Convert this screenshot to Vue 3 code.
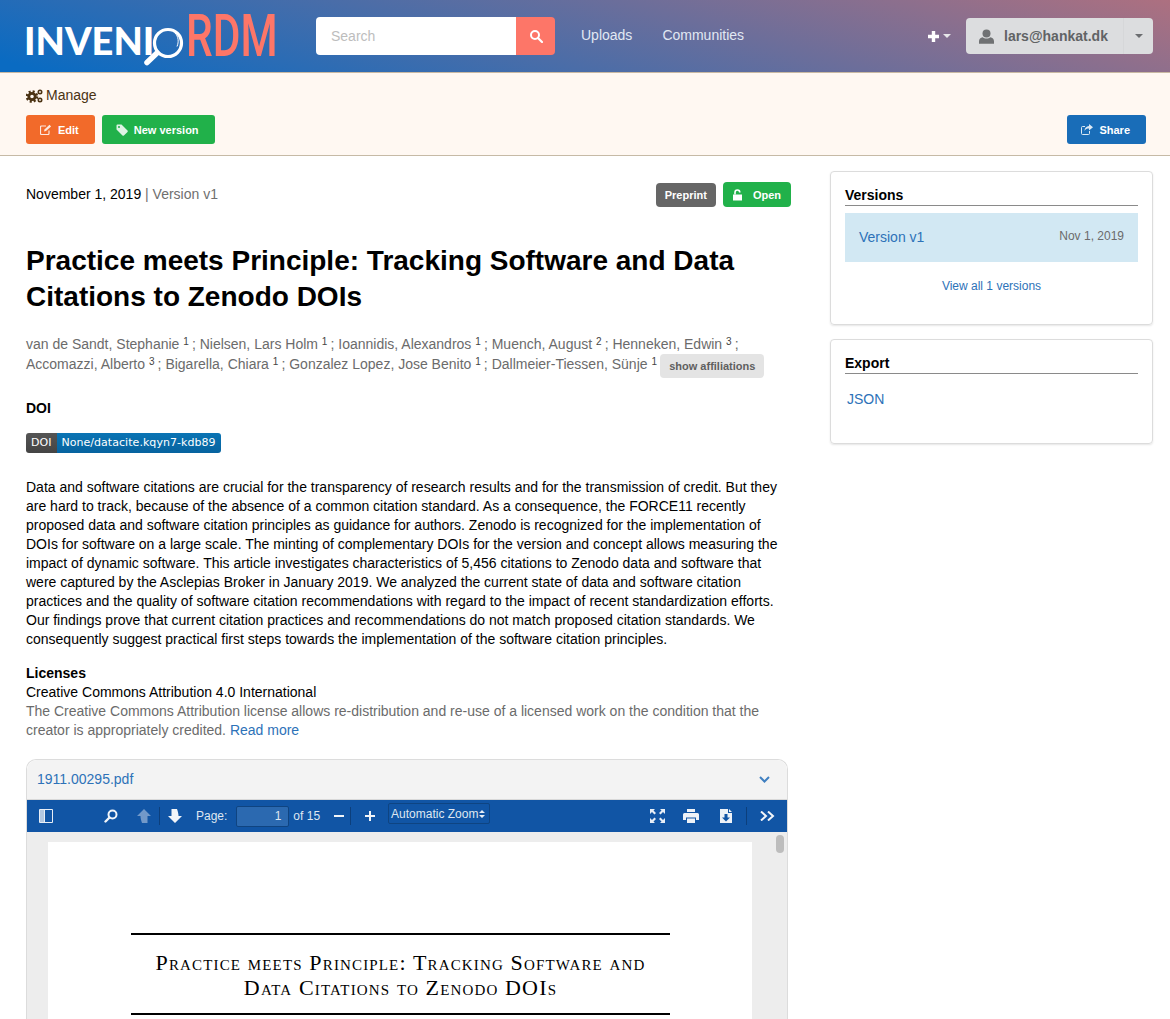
<script setup>
const authors = [
  ['van de Sandt, Stephanie', 1],
  ['Nielsen, Lars Holm', 1],
  ['Ioannidis, Alexandros', 1],
  ['Muench, August', 2],
  ['Henneken, Edwin', 3],
  ['Accomazzi, Alberto', 3],
  ['Bigarella, Chiara', 1],
  ['Gonzalez Lopez, Jose Benito', 1],
  ['Dallmeier-Tiessen, Sünje', 1],
]
</script>

<template>
  <div class="page">
    <header class="topbar">
      <div class="logo">
        <span class="logo-invenio">INVENI</span>
        <svg class="logo-lens" width="44" height="46" viewBox="0 0 44 46">
          <circle cx="28" cy="21" r="13.500" fill="none" stroke="#fff" stroke-width="3.200" />
          <path d="M35 11c3.500 3.500 4 9 2 13.500" fill="none" stroke="#fff" stroke-width="1" />
          <path d="M17 31 7 40.500" stroke="#fff" stroke-width="5.500" stroke-linecap="round" />
        </svg>
        <span class="logo-rdm">RDM</span>
      </div>
      <div class="search">
        <div class="search-input">Search</div>
        <div class="search-btn">
          <svg width="14" height="14" viewBox="0 0 14 14">
            <circle cx="6" cy="6" r="4" fill="none" stroke="#fff" stroke-width="2" />
            <path d="m9 9 4 4" stroke="#fff" stroke-width="2.200" stroke-linecap="round" />
          </svg>
        </div>
      </div>
      <nav class="nav">
        <a>Uploads</a>
        <a>Communities</a>
      </nav>
      <div class="top-right">
        <div class="plus">
          <svg width="13" height="13" viewBox="0 0 13 13"><path d="M6.500 1v11M1 6.500h11" stroke="#fff" stroke-width="3.400" /></svg>
          <i class="caret white"></i>
        </div>
        <div class="user">
          <svg width="15" height="15" viewBox="0 0 15 15" fill="#6f7173">
            <circle cx="7.500" cy="4.400" r="4" />
            <path d="M0 14.800v-2.600C0 10 1.600 8.600 3.600 8.200c1 .9 2.400 1.400 3.900 1.400s2.900-.5 3.900-1.400c2 .4 3.600 1.800 3.600 4v2.600z" />
          </svg>
          <span class="user-mail">lars@hankat.dk</span>
          <span class="user-toggle"><i class="caret grey"></i></span>
        </div>
      </div>
    </header>

    <section class="manage">
      <div class="manage-title">
        <svg width="17" height="14" viewBox="0 0 17 14" fill="none" stroke="#4a3213">
          <circle cx="6" cy="7.500" r="5" stroke-width="2.600" stroke-dasharray="2 1.930" />
          <circle cx="6" cy="7.500" r="3.200" stroke-width="2.800" />
          <circle cx="14" cy="3" r="1.700" stroke-width="1.600" />
          <circle cx="14" cy="11" r="1.700" stroke-width="1.600" />
        </svg>
        Manage
      </div>
      <div class="manage-actions">
        <button class="btn orange">
          <svg class="btn-ico" width="12" height="11" viewBox="0 0 12 11" fill="none" stroke="#fff" stroke-width="1.200">
            <path d="M9 6.500v3a1 1 0 0 1-1 1H1.500a1 1 0 0 1-1-1V3a1 1 0 0 1 1-1H6" />
            <path d="M4 7.500 4.500 5.500 9.500.8l1.600 1.600L6 7z" fill="#fff" stroke="none" />
          </svg>
          Edit
        </button>
        <button class="btn green">
          <svg class="btn-ico" width="12" height="12" viewBox="0 0 12 12" fill="#fff">
            <path d="M.5 1.500A1 1 0 0 1 1.500.5h4l6 6a1 1 0 0 1 0 1.400l-3.600 3.600a1 1 0 0 1-1.400 0l-6-6zM3 2a1 1 0 1 0 0 2 1 1 0 0 0 0-2z" fill-rule="evenodd" />
          </svg>
          New version
        </button>
        <button class="btn blue share">
          <svg class="btn-ico" width="12" height="11" viewBox="0 0 12 11" fill="none" stroke="#fff" stroke-width="1">
            <path d="M8.500 7v2.500a1 1 0 0 1-1 1h-6a1 1 0 0 1-1-1V3.500a1 1 0 0 1 1-1H4" />
            <path d="M8 0l4 3.200L8 6.400V4.600C6 4.600 4.500 5 3.500 7c0-3 1.800-4.700 4.500-4.900z" fill="#fff" stroke="none" />
          </svg>
          Share
        </button>
      </div>
    </section>

    <main class="content">
      <article class="record">
        <div class="meta">
          <div><span class="date">November 1, 2019</span> <span class="version">| Version v1</span></div>
          <div class="badges">
            <span class="badge dark">Preprint</span>
            <span class="badge open">
              <svg width="11" height="12" viewBox="0 0 11 12" fill="#fff">
                <path d="M1 5.500h9v6H1z" />
                <path d="M3 5.500V3.400a2.400 2.400 0 0 1 4.800 0" fill="none" stroke="#fff" stroke-width="1.600" />
              </svg>
              Open
            </span>
          </div>
        </div>

        <h1 class="title">Practice meets Principle: Tracking Software and Data Citations to Zenodo DOIs</h1>

        <p class="authors">
          <template v-for="(a, i) in authors" :key="a[0]">
            {{ a[0] }} <sup>{{ a[1] }}</sup><template v-if="i < authors.length - 1"> ; </template>
          </template>
          <span class="affil">show affiliations</span>
        </p>

        <h2 class="doi-head">DOI</h2>
        <div class="doi-badge"><span class="doi-l">DOI</span><span class="doi-r">None/datacite.kqyn7-kdb89</span></div>

        <p class="abstract">
          Data and software citations are crucial for the transparency of research results and for the transmission of credit. But they are hard to track, because of the absence of a common citation standard. As a consequence, the FORCE11 recently proposed data and software citation principles as guidance for authors. Zenodo is recognized for the implementation of DOIs for software on a large scale. The minting of complementary DOIs for the version and concept allows measuring the impact of dynamic software. This article investigates characteristics of 5,456 citations to Zenodo data and software that were captured by the Asclepias Broker in January 2019. We analyzed the current state of data and software citation practices and the quality of software citation recommendations with regard to the impact of recent standardization efforts. Our findings prove that current citation practices and recommendations do not match proposed citation standards. We consequently suggest practical first steps towards the implementation of the software citation principles.
        </p>

        <div class="licenses">
          <b>Licenses</b>
          <div>Creative Commons Attribution 4.0 International</div>
          <div class="license-text">The Creative Commons Attribution license allows re-distribution and re-use of a licensed work on the condition that the creator is appropriately credited. <a>Read more</a></div>
        </div>

        <div class="preview">
          <div class="preview-head">
            <a>1911.00295.pdf</a>
            <svg width="11" height="7" viewBox="0 0 11 7"><path d="m1 1 4.500 4.500L10 1" fill="none" stroke="#3f7fc0" stroke-width="2" /></svg>
          </div>
          <div class="pdf-toolbar">
            <div class="tb-left">
              <svg class="sidebar-ico" width="14" height="14" viewBox="0 0 14 14">
                <path d="M.5.500h13v13H.5z" fill="none" stroke="#e8eef6" />
                <path d="M1 1h4v12H1z" fill="#e8eef6" opacity=".75" />
                <path d="M5 1h1v12H5z" fill="#e8eef6" />
              </svg>
              <svg class="find-ico" width="14" height="14" viewBox="0 0 14 14">
                <circle cx="8.500" cy="5.500" r="4" fill="none" stroke="#f2f5f9" stroke-width="2" />
                <path d="M5.500 8.500 1.500 12.500" stroke="#f2f5f9" stroke-width="2.400" stroke-linecap="round" />
              </svg>
              <svg class="up-ico" width="14" height="14" viewBox="0 0 14 14"><path d="M7 0 14 7H10.500V14H5C4 11 3.500 9 3.500 7H0z" fill="#e8eef6" opacity=".45" /></svg>
              <i class="tb-sep"></i>
              <svg class="down-ico" width="14" height="14" viewBox="0 0 14 14"><path d="M7 14 0 7H3.500V0H9C10 3 10.500 5 10.500 7H14z" fill="#f2f5f9" /></svg>
              <span class="tb-label">Page:</span>
              <span class="tb-page">1</span>
              <span class="tb-of">of 15</span>
              <svg class="minus-ico" width="10" height="2" viewBox="0 0 10 2"><path d="M0 0h10v2H0z" fill="#f2f5f9" /></svg>
              <i class="tb-sep sep-zoom"></i>
              <svg class="plus-ico" width="10" height="10" viewBox="0 0 10 10"><path d="M4 0h2v4h4v2H6v4H4V6H0V4h4z" fill="#f2f5f9" /></svg>
              <span class="tb-zoom">Automatic Zoom<svg width="6" height="8" viewBox="0 0 6 8" fill="#e8eef6"><path d="M3 0 6 3H0zM3 8 0 5h6z" /></svg></span>
            </div>
            <div class="tb-right">
              <svg class="full-ico" width="15" height="14" viewBox="0 0 15 14" fill="#e8eef6">
                <path d="M0 0h5L3.500 1.500 6 4 4.500 5.500 2 3 0 5zM15 0h-5l1.500 1.500L9 4l1.500 1.500L13 3l2 2zM0 14h5l-1.500-1.500L6 10 4.500 8.500 2 11l-2-2zM15 14h-5l1.500-1.500L9 10l1.500-1.500L13 11l2-2z" />
              </svg>
              <svg class="print-ico" width="16" height="14" viewBox="0 0 16 14" fill="#eef2f7">
                <path d="M4 0h8v3H4zM1.500 4h13A1.500 1.500 0 0 1 16 5.500V11h-3V8.500H3V11H0V5.500A1.500 1.500 0 0 1 1.500 4zM4 9.500h8V14H4z" />
              </svg>
              <svg class="save-ico" width="12" height="14" viewBox="0 0 12 14">
                <path d="M0 0h8v4h4v10H0zM9 0l3 3H9z" fill="#eef2f7" />
                <path d="M4.500 5h3v3.500H10L6 12.500 2 8.500h2.500z" fill="#1155a5" />
              </svg>
              <i class="tb-sep"></i>
              <svg class="more-ico" width="15" height="10" viewBox="0 0 15 10" fill="none" stroke="#f2f5f9" stroke-width="2"><path d="m1 .500 5 4.500-5 4.500M8 .500 13 5l-5 4.500" /></svg>
            </div>
          </div>
          <div class="pdf-body">
            <div class="pdf-page">
              <div class="paper-title">
                Practice meets Principle: Tracking Software and<br />Data Citations to Zenodo DOIs
              </div>
            </div>
            <i class="scroll-thumb"></i>
          </div>
        </div>
      </article>

      <aside class="side">
        <div class="card versions">
          <h3>Versions</h3>
          <div class="version-row"><a>Version v1</a><small>Nov 1, 2019</small></div>
          <a class="view-all">View all 1 versions</a>
        </div>
        <div class="card export">
          <h3>Export</h3>
          <a class="json">JSON</a>
        </div>
      </aside>
    </main>
  </div>
</template>

<style scoped>
.page {
  width: 1170px;
  height: 1019px;
  overflow: hidden;
  background: #fff;
  color: #000;
  font-family: 'Liberation Sans', Arial, sans-serif;
  font-size: 14px;
  line-height: 19px;
}
a {
  color: #2d72b8;
}

/* top bar */
.topbar {
  display: flex;
  align-items: center;
  height: 72px;
  padding: 0 17px 0 26px;
  background: linear-gradient(16deg, #0a6bc2 3%, #ad7080 100%);
  border-bottom: 1px solid #c9b9a3;
}
.logo {
  display: flex;
  align-items: flex-start;
  width: 252px;
  height: 72px;
  flex: none;
}
.logo-invenio {
  color: #fff;
  font-family: 'Lato', sans-serif;
  font-weight: 900;
  font-size: 38px;
  line-height: 38px;
  margin: 21px 0 0 -2px;
}
.logo-lens {
  flex: none;
  margin: 22px 0 0 -14px;
}
.logo-rdm {
  color: #fd7668;
  font-family: 'Roboto', sans-serif;
  font-weight: 500;
  font-size: 59px;
  line-height: 50px;
  margin: 11px 0 0 2px;
  transform: scaleX(0.72);
  transform-origin: left center;
}
.search {
  display: flex;
  margin-left: 38px;
  width: 239px;
  height: 38px;
  flex: none;
}
.search-input {
  flex: 1;
  background: #fff;
  border-radius: 4px 0 0 4px;
  color: #bdbdbd;
  padding-left: 15px;
  line-height: 38px;
}
.search-btn {
  width: 39px;
  background: #fd7668;
  border-radius: 0 4px 4px 0;
  display: flex;
  align-items: center;
  justify-content: center;
}
.nav {
  display: flex;
  gap: 30px;
  margin-left: 26px;
  margin-top: -2px;
}
.nav a {
  color: #e1e8f3;
}
.top-right {
  display: flex;
  align-items: center;
  margin-left: auto;
  gap: 15px;
}
.plus {
  display: flex;
  align-items: center;
  gap: 3px;
}
.caret {
  width: 0;
  height: 0;
  border-left: 4px solid transparent;
  border-right: 4px solid transparent;
  border-top: 4px solid #fff;
}
.caret.white {
  border-top-color: #e7e7ea;
}
.caret.grey {
  border-top-color: #6b6d70;
}
.user {
  display: flex;
  align-items: center;
  width: 187px;
  height: 36px;
  box-sizing: border-box;
  background: #dcdddf;
  border-radius: 4px;
  padding-left: 13px;
}
.user-mail {
  margin-left: 10px;
  color: #616365;
  font-weight: 700;
}
.user-toggle {
  display: flex;
  align-items: center;
  justify-content: center;
  margin-left: auto;
  width: 30px;
  height: 36px;
  border-left: 1px solid #d6d7d9;
  box-sizing: border-box;
}

/* manage bar */
.manage {
  height: 83px;
  box-sizing: border-box;
  background: #fff8f2;
  border-bottom: 1px solid #c6baa6;
  padding: 13px 24px 0 26px;
}
.manage-title {
  display: flex;
  align-items: center;
  gap: 3px;
  color: #4a3213;
  height: 19px;
}
.manage-actions {
  display: flex;
  gap: 7px;
  margin-top: 10px;
}
.btn {
  display: flex;
  align-items: center;
  gap: 6px;
  height: 29px;
  padding: 0 16px 0 14px;
  border: 0;
  border-radius: 3px;
  color: #fff;
  font: 700 11px 'Liberation Sans', sans-serif;
}
.btn-ico {
  opacity: 0.85;
}
.orange {
  background: #f26a2a;
}
.green {
  background: #21b14a;
}
.blue {
  background: #196db8;
}
.share {
  margin-left: auto;
}

/* main layout */
.content {
  display: flex;
  padding: 15px 17px 0 26px;
}
.record {
  width: 765px;
  flex: none;
}
.meta {
  display: flex;
  justify-content: space-between;
  align-items: flex-start;
  padding-top: 11px;
}
.meta > div:first-child {
  margin-top: 3px;
}
.version {
  color: #6f6f6f;
}
.badges {
  display: flex;
  gap: 7px;
}
.badge {
  display: flex;
  align-items: center;
  height: 24px;
  padding: 0 9px;
  border-radius: 4px;
  color: #fff;
  font-weight: 700;
  font-size: 11px;
}
.badge.dark {
  background: #666;
  margin-top: 1px;
}
.badge.open {
  background: #21b14a;
  height: 25px;
  box-sizing: border-box;
  gap: 10px;
  padding: 1px 10px 0 9px;
}
.title {
  margin: 36px 0 0;
  font-size: 28px;
  line-height: 36px;
  font-weight: 700;
}
.authors {
  margin: 19px 0 0;
  color: #6b6b6b;
  line-height: 20px;
}
sup {
  font-size: 10px;
  line-height: 0;
  vertical-align: 4px;
  color: #444;
  margin-right: -0.8px;
}
.affil {
  display: inline-block;
  margin-left: 4px;
  height: 24px;
  line-height: 25px;
  padding: 0 9px;
  background: #e4e4e4;
  border-radius: 4px;
  font-size: 11px;
  font-weight: 700;
  color: #5f5f5f;
  vertical-align: -1px;
}
.doi-head {
  margin: 21px 0 0;
  font-size: 14px;
  line-height: 19px;
}
.doi-badge {
  display: inline-flex;
  margin-top: 15px;
  height: 20px;
  border-radius: 3px;
  overflow: hidden;
  color: #fff;
  font-family: 'DejaVu Sans', sans-serif;
  font-size: 11px;
  line-height: 20px;
}
.doi-l {
  background: linear-gradient(#555, #444);
  padding: 0 6px 0 5px;
}
.doi-r {
  background: linear-gradient(#0a74b4, #07639f);
  padding: 0 5px 0 4px;
  letter-spacing: 0.05px;
}
.abstract {
  margin: 25px 0 0;
  width: 760px;
}
.licenses {
  margin-top: 15px;
}
.license-text {
  color: #6b6b6b;
}

/* pdf preview */
.preview {
  margin-top: 19px;
  width: 762px;
  border: 1px solid #dcdcdc;
  border-bottom: 0;
  border-radius: 10px 10px 0 0;
  box-sizing: border-box;
}
.preview-head {
  display: flex;
  justify-content: space-between;
  align-items: center;
  height: 39px;
  padding: 0 17px 0 10px;
  background: #f3f3f3;
  border-radius: 10px 10px 0 0;
  border-bottom: 1px solid #d9d9d9;
}
.pdf-toolbar {
  display: flex;
  justify-content: space-between;
  align-items: center;
  height: 32px;
  background: #1155a5;
  color: #dfe7f1;
  font-size: 12px;
}
.tb-left,
.tb-right {
  display: flex;
  align-items: center;
}
.tb-left {
  padding-left: 12px;
}
.find-ico {
  margin-left: 51px;
}
.up-ico {
  margin-left: 19px;
}
.tb-sep {
  width: 1px;
  height: 18px;
  background: #0c3f7c;
  margin: 0 8px;
}
.tb-label {
  margin-left: 14px;
}
.tb-page {
  width: 53px;
  height: 21px;
  margin-left: 9px;
  box-sizing: border-box;
  background: #2b69b0;
  border: 1px solid #0f4481;
  border-radius: 2px;
  text-align: right;
  padding-right: 7px;
  line-height: 19px;
}
.tb-of {
  margin-left: 4px;
}
.minus-ico {
  margin-left: 14px;
}
.sep-zoom {
  margin: 0 10px 0 6px;
}
.plus-ico {
  margin-left: 4px;
}
.tb-zoom {
  display: flex;
  align-items: center;
  gap: 1px;
  height: 21px;
  box-sizing: border-box;
  margin-left: 13px;
  padding: 1px 4px 0 2px;
  border: 1px solid #0e4482;
  border-radius: 2px;
  margin-top: -5px;
}
.tb-right {
  padding-right: 12px;
}
.print-ico {
  margin-left: 18px;
}
.save-ico {
  margin-left: 21px;
}
.tb-right .tb-sep {
  margin: 0 13px 0 14px;
}
.pdf-body {
  position: relative;
  height: 300px;
  background: #ededed;
  padding: 10px 0 0 21px;
}
.pdf-page {
  width: 704px;
  height: 400px;
  background: #fff;
  padding-top: 91px;
  box-sizing: border-box;
}
.paper-title {
  margin: 0 82px 0 83px;
  border-top: 2px solid #000;
  border-bottom: 2px solid #000;
  padding: 15px 0 13px;
  text-align: center;
  font-family: 'Liberation Serif', serif;
  font-variant: small-caps;
  font-size: 22px;
  line-height: 25px;
  letter-spacing: 1.15px;
  white-space: nowrap;
}
.scroll-thumb {
  position: absolute;
  top: 3px;
  right: 3px;
  width: 8px;
  height: 18px;
  border-radius: 4px;
  background: #bdbdbd;
}

/* sidebar */
.side {
  margin-left: 39px;
  width: 323px;
  flex: none;
  display: flex;
  flex-direction: column;
  gap: 14px;
}
.card {
  box-sizing: border-box;
  border: 1px solid #dcdcdc;
  border-radius: 4px;
  box-shadow: 0 1px 2px rgba(0, 0, 0, 0.1);
  padding: 14px 14px 0;
}
.card h3 {
  margin: 0;
  font-size: 14px;
  line-height: 19px;
  border-bottom: 1px solid #8a8a8a;
}
.versions {
  height: 154px;
}
.version-row {
  display: flex;
  justify-content: space-between;
  align-items: flex-start;
  height: 49px;
  margin-top: 7px;
  padding: 15px 14px 0;
  box-sizing: border-box;
  background: #d2e8f3;
}
.version-row small {
  font-size: 12px;
  color: #6b6b6b;
  margin-top: -1px;
}
.view-all {
  display: block;
  margin-top: 15px;
  text-align: center;
  font-size: 12px;
}
.export {
  height: 105px;
}
.json {
  display: block;
  margin: 16px 0 0 2px;
}
</style>

<style>
html,
body {
  margin: 0;
  background: #fff;
}
</style>
